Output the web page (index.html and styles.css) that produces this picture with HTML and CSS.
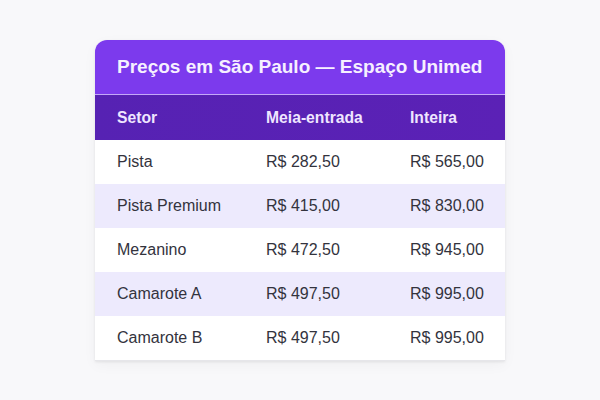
FILE: index.html
```html
<!DOCTYPE html>
<html lang="pt-BR">
<head>
<meta charset="utf-8">
<link rel="stylesheet" href="styles.css">
</head>
<body>
<main class="page">
  <section class="card">
    <h1 class="title">Preços em São Paulo — Espaço Unimed</h1>
    <div class="row head">
      <div>Setor</div><div>Meia-entrada</div><div>Inteira</div>
    </div>
    <div class="row"><div>Pista</div><div>R$ 282,50</div><div>R$ 565,00</div></div>
    <div class="row alt"><div>Pista Premium</div><div>R$ 415,00</div><div>R$ 830,00</div></div>
    <div class="row"><div>Mezanino</div><div>R$ 472,50</div><div>R$ 945,00</div></div>
    <div class="row alt"><div>Camarote A</div><div>R$ 497,50</div><div>R$ 995,00</div></div>
    <div class="row"><div>Camarote B</div><div>R$ 497,50</div><div>R$ 995,00</div></div>
  </section>
</main>
</body>
</html>
```

FILE: styles.css
```css
* { box-sizing: border-box; }
html, body { margin: 0; padding: 0; }
body {
  background: #f8f8fa;
  font-family: "Liberation Sans", Arial, sans-serif;
  width: 600px;
  height: 400px;
}
.page {
  padding-top: 40px;
  display: flex;
  justify-content: center;
}
.card {
  width: 410px;
  background: #ffffff;
  border-radius: 12px 12px 0 0;
  overflow: hidden;
  box-shadow: 0 1px 3px rgba(0,0,0,0.08), 0 4px 14px rgba(0,0,0,0.04);
  border-bottom: 1px solid #e6e6ea;
}
.title {
  margin: 0;
  height: 55px;
  padding: 0 22px;
  display: flex;
  align-items: center;
  background: #7c3aed;
  color: #f6f0ff;
  font-size: 19px;
  font-weight: 700;
  border-bottom: 1px solid #c4a8f8;
}
.row {
  display: grid;
  grid-template-columns: 149px 144px 1fr;
  height: 44px;
  align-items: center;
  padding-left: 22px;
  font-size: 16px;
  color: #33333d;
}
.row.head {
  height: 45px;
  background: linear-gradient(90deg, #5622b3, #5b21b6);
  color: #efe6ff;
  font-weight: 700;
  font-size: 15.7px;
}
.row.alt { background: #edeafd; }
```
